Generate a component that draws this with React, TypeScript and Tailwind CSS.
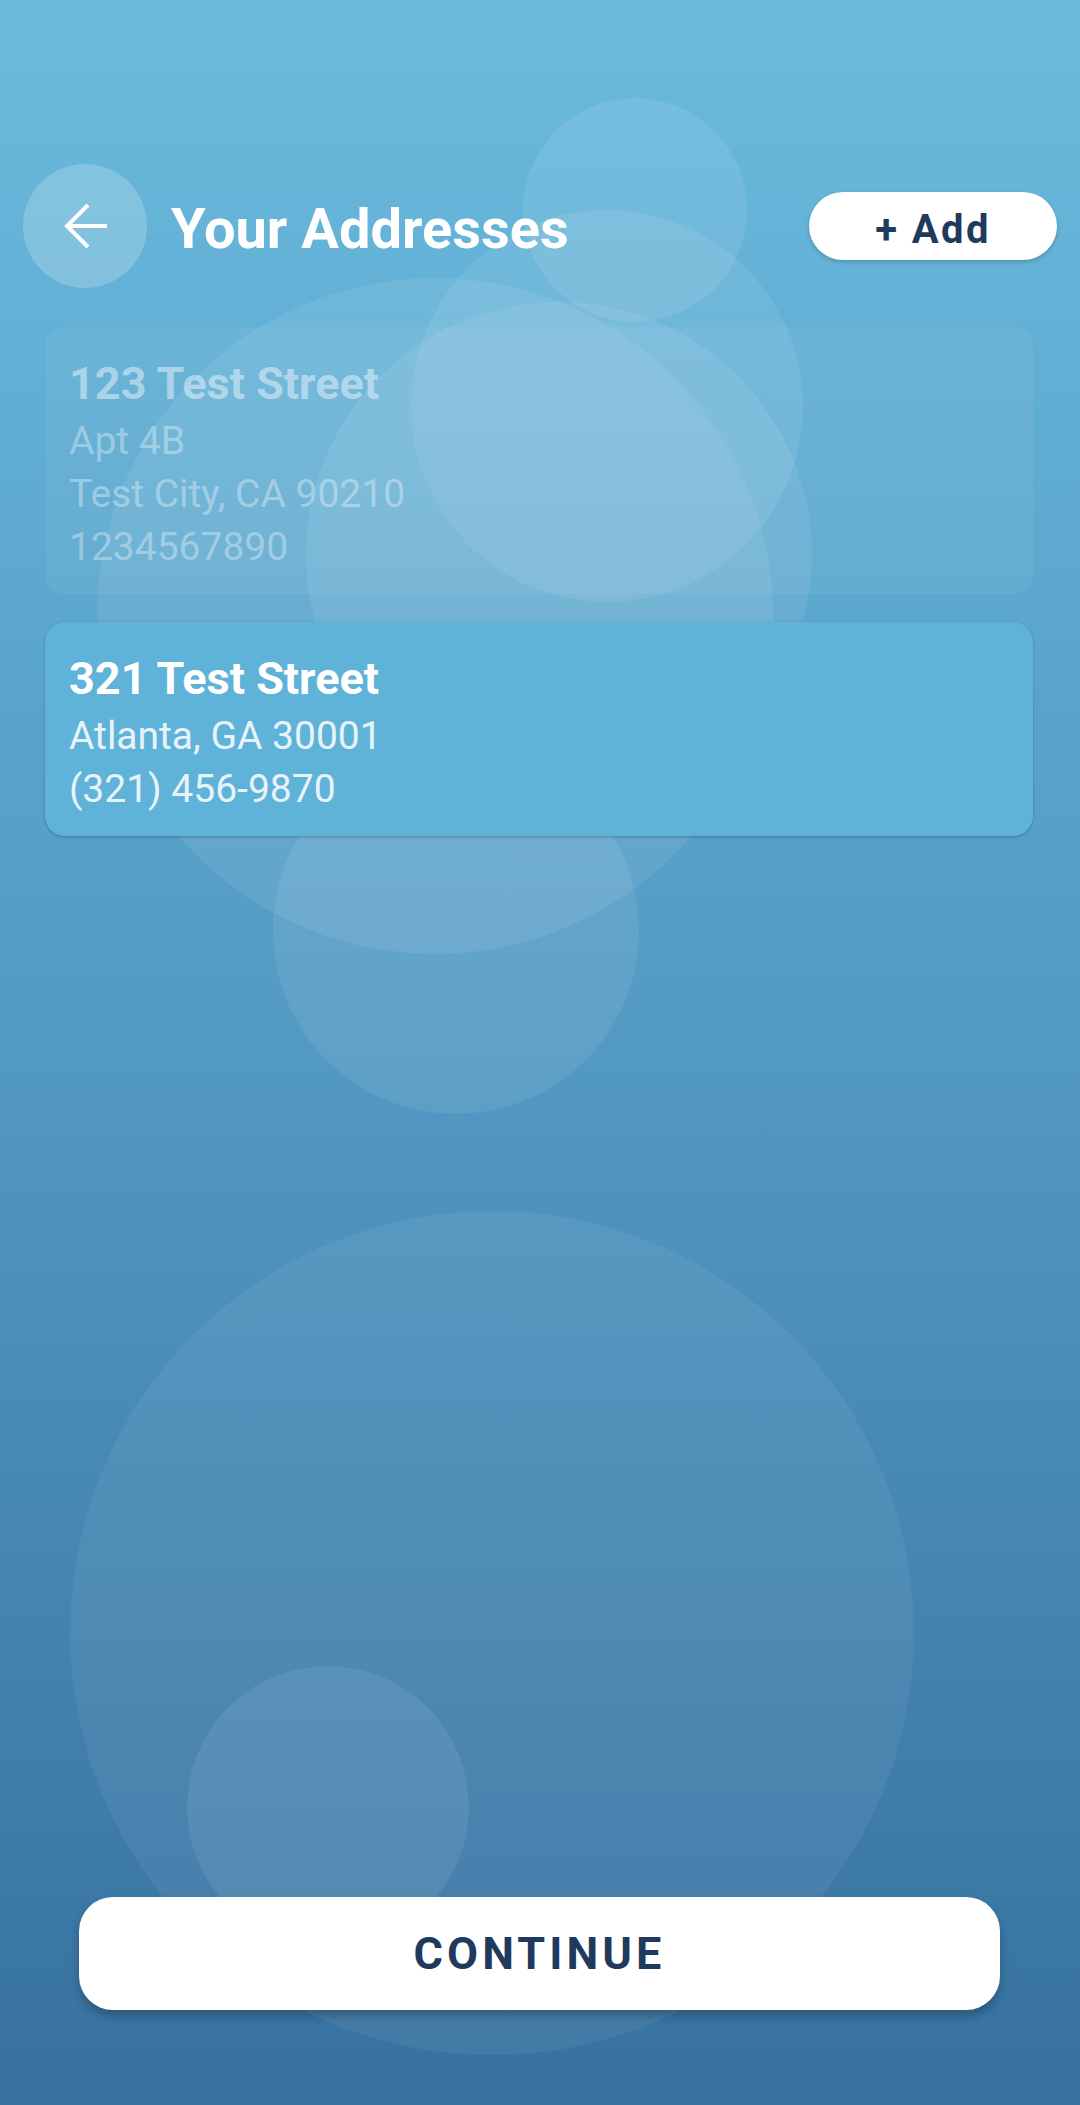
import React from "react";

const addresses = [
  { title: "123 Test Street", lines: ["Apt 4B", "Test City, CA 90210", "1234567890"], selected: false },
  { title: "321 Test Street", lines: ["Atlanta, GA 30001", "(321) 456-9870"], selected: true },
];

function BackArrow() {
  return (
    <svg width="46" height="46" viewBox="0 0 46 46" fill="none" stroke="white" strokeWidth="4" strokeLinecap="butt" strokeLinejoin="miter">
      <path d="M45 23H5" />
      <path d="M26 2L5 23L26 44" />
    </svg>
  );
}

export default function App() {
  return (
    <div className="relative flex h-[2105px] w-[1080px] flex-col overflow-hidden bg-gradient-to-b from-[#6abbde] via-[#5299c3] to-[#3771a0] font-['Roboto',sans-serif]">
      {/* decorative bubbles */}
      <div className="pointer-events-none absolute left-[523px] top-[98px] h-[224px] w-[224px] rounded-full bg-white/[0.09]" />
      <div className="pointer-events-none absolute left-[411px] top-[210px] h-[392px] w-[392px] rounded-full bg-white/[0.08]" />
      <div className="pointer-events-none absolute left-[97px] top-[278px] h-[676px] w-[676px] rounded-full bg-white/[0.08]" />
      <div className="pointer-events-none absolute left-[306px] top-[302px] h-[506px] w-[506px] rounded-full bg-white/[0.08]" />
      <div className="pointer-events-none absolute left-[273px] top-[748px] h-[366px] w-[366px] rounded-full bg-white/[0.08]" />
      <div className="pointer-events-none absolute left-[70px] top-[1211px] h-[844px] w-[844px] rounded-full bg-white/[0.06]" />
      <div className="pointer-events-none absolute left-[187px] top-[1666px] h-[282px] w-[282px] rounded-full bg-white/[0.08]" />

      {/* header */}
      <div className="relative flex items-center justify-between pl-[23px] pr-[23px] pt-[164px]">
        <div className="flex items-center">
          <button className="flex h-[124px] w-[124px] items-center justify-center rounded-full bg-white/20">
            <BackArrow />
          </button>
          <h1 className="ml-[24px] pt-[5px] text-[56px] font-bold leading-none text-white">Your Addresses</h1>
        </div>
        <button className="flex h-[68px] w-[248px] items-center justify-center rounded-full bg-white pt-[7px] text-[40px] font-bold leading-none tracking-[0.06em] text-[#1f3a5c] shadow-[0_2px_4px_rgba(0,0,0,0.2)]">
          + Add
        </button>
      </div>

      {/* address cards */}
      <div className="relative ml-[45px] mr-[47px] mt-[39px] flex flex-col gap-[28px]">
        {addresses.map((a) =>
          a.selected ? (
            <div
              key={a.title}
              className="rounded-[20px] bg-[#5fb2d8] px-[24px] pb-[20px] pt-[26px] shadow-[0_1px_3px_rgba(0,0,0,0.25)]"
            >
              <div className="text-[45px] font-bold leading-[62px] text-white">{a.title}</div>
              {a.lines.map((l) => (
                <div key={l} className="text-[39px] leading-[53px] text-white/85">
                  {l}
                </div>
              ))}
            </div>
          ) : (
            <div key={a.title} className="rounded-[20px] bg-white/[0.05] px-[24px] pb-[20px] pt-[26px]">
              <div className="text-[45px] font-bold leading-[62px] text-white/45">{a.title}</div>
              {a.lines.map((l) => (
                <div key={l} className="text-[39px] leading-[53px] text-white/35">
                  {l}
                </div>
              ))}
            </div>
          )
        )}
      </div>

      {/* continue */}
      <div className="relative mb-[95px] ml-[79px] mr-[80px] mt-auto">
        <button className="flex h-[113px] w-full items-center justify-center rounded-[34px] bg-white text-[45px] font-bold leading-none tracking-[0.09em] text-[#1f3a5c] shadow-[0_6px_10px_rgba(0,0,0,0.25)]">
          CONTINUE
        </button>
      </div>
    </div>
  );
}
